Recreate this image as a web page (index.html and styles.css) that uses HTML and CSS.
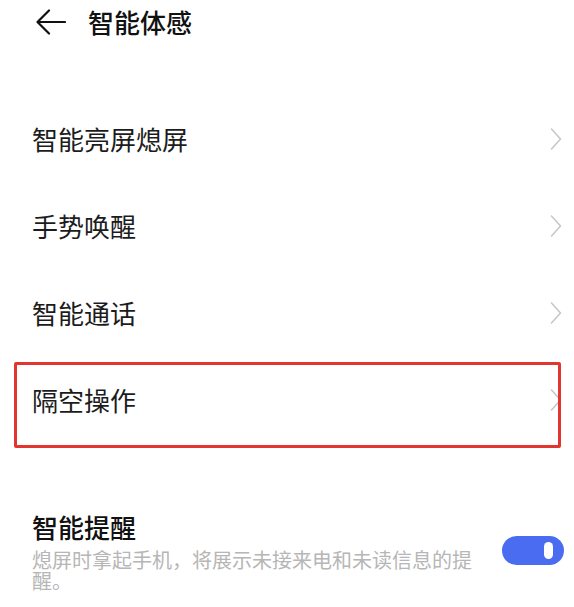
FILE: index.html
```html
<!DOCTYPE html>
<html lang="zh-CN">
<head>
<meta charset="utf-8">
<title>智能体感</title>
<link rel="stylesheet" href="styles.css">
</head>
<body>
<header class="header">
  <svg class="back" width="30" height="26" viewBox="0 0 30 26" aria-hidden="true">
    <path d="M29 13 H2 M13 1.5 L1.5 13 L13 24.5" fill="none" stroke="#111" stroke-width="2.2" stroke-linecap="round" stroke-linejoin="round"/>
  </svg>
  <h1 class="title">智能体感</h1>
</header>

<ul class="list">
  <li class="row"><span class="label">智能亮屏熄屏</span><svg class="chev" width="12" height="22" viewBox="0 0 12 22"><path d="M1.5 1 L10.5 11 L1.5 21" fill="none" stroke="#c6c6c6" stroke-width="1.5" stroke-linecap="round" stroke-linejoin="round"/></svg></li>
  <li class="row"><span class="label">手势唤醒</span><svg class="chev" width="12" height="22" viewBox="0 0 12 22"><path d="M1.5 1 L10.5 11 L1.5 21" fill="none" stroke="#c6c6c6" stroke-width="1.5" stroke-linecap="round" stroke-linejoin="round"/></svg></li>
  <li class="row"><span class="label">智能通话</span><svg class="chev" width="12" height="22" viewBox="0 0 12 22"><path d="M1.5 1 L10.5 11 L1.5 21" fill="none" stroke="#c6c6c6" stroke-width="1.5" stroke-linecap="round" stroke-linejoin="round"/></svg></li>
  <li class="row row-marked"><span class="label">隔空操作</span><svg class="chev" width="12" height="22" viewBox="0 0 12 22"><path d="M1.5 1 L10.5 11 L1.5 21" fill="none" stroke="#c6c6c6" stroke-width="1.5" stroke-linecap="round" stroke-linejoin="round"/></svg></li>
</ul>

<section class="switch-row">
  <div class="switch-text">
    <div class="switch-title">智能提醒</div>
    <p class="switch-desc">熄屏时拿起手机，将展示未接来电和未读信息的提醒。</p>
  </div>
  <div class="toggle"><span class="knob"></span></div>
</section>
</body>
</html>
```

FILE: styles.css
```css
html, body {
  margin: 0;
  padding: 0;
  background: #ffffff;
}

body {
  font-family: "Noto Sans CJK SC", "Noto Sans", sans-serif;
  color: #1a1a1a;
}

.header {
  height: 44px;
  display: flex;
  align-items: center;
  padding-left: 36px;
}

.back {
  display: block;
  flex: none;
}

.title {
  margin: 0 0 0 22px;
  font-size: 26px;
  font-weight: 500;
  line-height: 34px;
  color: #111;
}

.list {
  list-style: none;
  margin: 51px 0 0 0;
  padding: 0;
}

.row {
  height: 87px;
  display: flex;
  align-items: center;
  justify-content: space-between;
  padding: 0 12px 0 32px;
  position: relative;
}

.label {
  font-size: 26px;
  line-height: 34px;
  color: #1c1c1c;
}

.chev {
  display: block;
  flex: none;
}

.row-marked::after {
  content: "";
  position: absolute;
  left: 14px;
  right: 13px;
  top: 6px;
  height: 86px;
  box-sizing: border-box;
  border: 3px solid #e2352f;
  border-radius: 2px;
}

.switch-row {
  margin-top: 67px;
  display: flex;
  align-items: center;
  justify-content: space-between;
  padding: 0 10px 0 32px;
}

.switch-text {
  width: 450px;
}

.switch-title {
  font-size: 26px;
  line-height: 34px;
  font-weight: 500;
  color: #111;
}

.switch-desc {
  margin: 5px 0 0 0;
  font-size: 20px;
  line-height: 21px;
  color: #b6b6b6;
}

.toggle {
  width: 62px;
  height: 29px;
  border-radius: 15px;
  background: #4a6cf0;
  display: flex;
  align-items: center;
  justify-content: flex-end;
  padding-right: 11px;
  box-sizing: border-box;
  flex: none;
}

.knob {
  width: 9px;
  height: 17px;
  border-radius: 5px;
  background: #ffffff;
}
```
